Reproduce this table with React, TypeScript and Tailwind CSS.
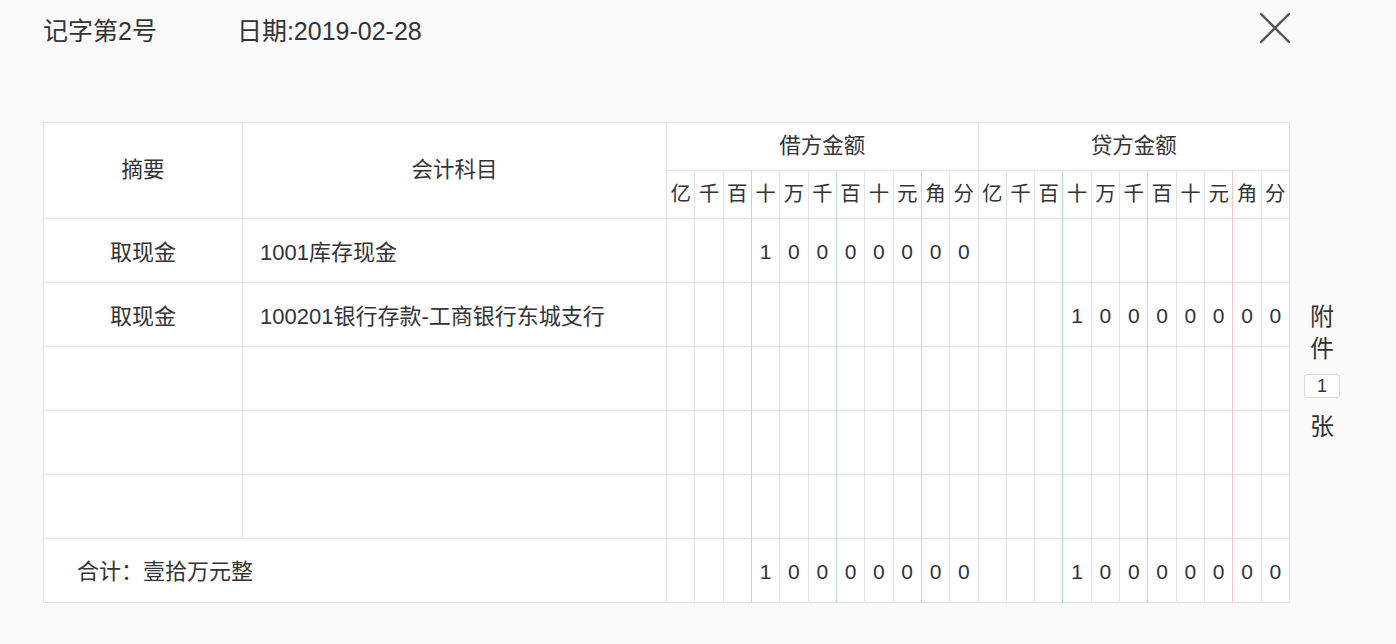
import React from "react";

const LABELS = ["亿", "千", "百", "十", "万", "千", "百", "十", "元", "角", "分"];

const AMOUNT = ["", "", "", "1", "0", "0", "0", "0", "0", "0", "0"];
const EMPTY = ["", "", "", "", "", "", "", "", "", "", ""];

function rightBorder(i: number) {
  if (i === 2 || i === 5) return "border-r-[#b4dbe8]";
  if (i === 8) return "border-r-[#f1c6c6]";
  return "border-r-[#e3e3e6]";
}

function DigitCells({ digits, label }: { digits: string[]; label?: boolean }) {
  return (
    <>
      {digits.map((d, i) => (
        <div
          key={i}
          className={`flex items-center justify-center border-r border-b border-b-[#e3e3e6] ${rightBorder(i)} ${
            label ? "text-[20.5px]" : "text-[21px] pt-[2px]"
          }`}
        >
          {d}
        </div>
      ))}
    </>
  );
}

const rows = [
  { summary: "取现金", account: "1001库存现金", debit: AMOUNT, credit: EMPTY },
  { summary: "取现金", account: "100201银行存款-工商银行东城支行", debit: EMPTY, credit: AMOUNT },
  { summary: "", account: "", debit: EMPTY, credit: EMPTY },
  { summary: "", account: "", debit: EMPTY, credit: EMPTY },
  { summary: "", account: "", debit: EMPTY, credit: EMPTY },
];

export default function App() {
  const cell = "border-r border-b border-[#e3e3e6]";
  return (
    <div
      className="w-[1396px] h-[644px] bg-[#fafafa] text-[#333338] overflow-hidden"
      style={{ fontFamily: '"Liberation Sans", "Noto Sans CJK SC", sans-serif' }}
    >
      <div className="pl-[43px] pt-[12px] w-[1291px] flex items-start justify-between">
        <div className="flex items-center h-[38px] text-[25px] leading-[38px]">
          <span>记字第2号</span>
          <span className="ml-[80px]">日期:2019-02-28</span>
        </div>
        <svg width="32" height="32" viewBox="0 0 32 32">
          <path d="M2 2 L30 30 M30 2 L2 30" stroke="#555558" strokeWidth="2.4" strokeLinecap="round" fill="none" />
        </svg>
      </div>

      <div className="flex pl-[43px] mt-[72px]">
        <div className="w-[1247px] bg-white border-l border-t border-[#e3e3e6] grid grid-cols-[199px_424px_repeat(22,minmax(0,1fr))] grid-rows-[48px_48px_repeat(6,64px)]">
          <div className={`${cell} row-span-2 flex items-center justify-center text-[21.5px]`}>摘要</div>
          <div className={`${cell} row-span-2 flex items-center justify-center text-[21.5px]`}>会计科目</div>
          <div className={`${cell} col-span-11 flex items-center justify-center text-[21.5px]`}>借方金额</div>
          <div className={`${cell} col-span-11 flex items-center justify-center text-[21.5px]`}>贷方金额</div>
          <DigitCells digits={LABELS} label />
          <DigitCells digits={LABELS} label />

          {rows.map((r, idx) => (
            <React.Fragment key={idx}>
              <div className={`${cell} flex items-center justify-center pt-[3px] text-[22px]`}>{r.summary}</div>
              <div className={`${cell} flex items-center pl-[17px] pt-[3px] text-[22px]`}>{r.account}</div>
              <DigitCells digits={r.debit} />
              <DigitCells digits={r.credit} />
            </React.Fragment>
          ))}

          <div className={`${cell} col-span-2 flex items-center pl-[33px] pt-[2px] text-[22px]`}>合计：壹拾万元整</div>
          <DigitCells digits={AMOUNT} />
          <DigitCells digits={AMOUNT} />
        </div>

        <div className="w-[64px] flex flex-col items-center justify-center pt-[18px] text-[24px]">
          <div className="leading-[32px]">附</div>
          <div className="leading-[32px]">件</div>
          <div className="mt-[9px] w-[36px] h-[24px] border border-[#d9d9dc] rounded-[3px] bg-white flex items-center justify-center text-[18px] leading-none">
            1
          </div>
          <div className="mt-[13px] leading-[32px]">张</div>
        </div>
      </div>
    </div>
  );
}
